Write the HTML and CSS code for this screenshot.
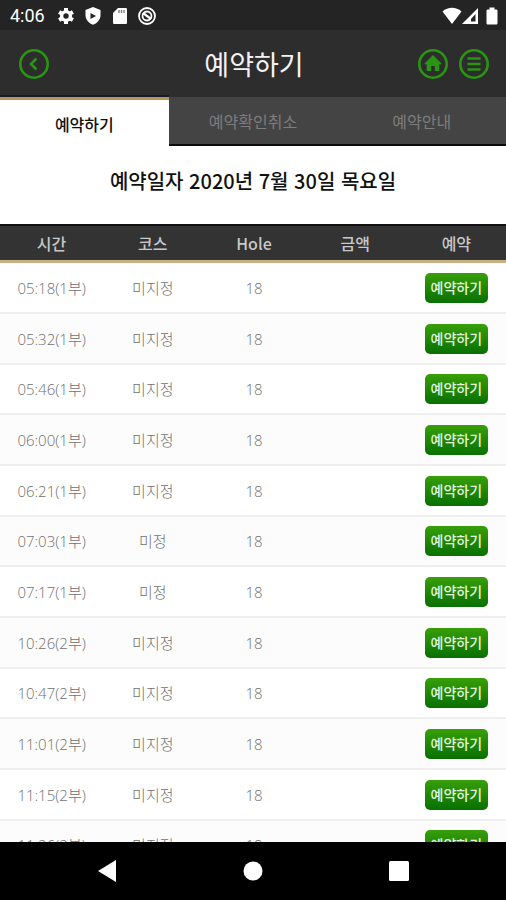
FILE: index.html
```html
<!DOCTYPE html>
<html lang="ko">
<head>
<meta charset="utf-8">
<meta name="viewport" content="width=device-width, initial-scale=1">
<title>예약하기</title>
<link rel="stylesheet" href="styles.css">
</head>
<body>
<div class="status">
  <span class="clock">4:06</span>
  <div class="notices">
    <svg viewBox="0 0 18 18"><g stroke="#fff" stroke-width="4"><path d="M9 1v16M2.1 5l13.8 8M2.1 13l13.8-8"/></g><circle cx="9" cy="9" r="6" fill="#fff"/><circle cx="9" cy="9" r="2.7" fill="#242424"/></svg>
    <svg viewBox="0 0 18 18"><path d="M9 0l7.500 3v5c0 4.500-3 8-7.500 9.800C4.500 16 1.500 12.500 1.500 8V3z" fill="#fff"/><path d="M6.500 6l5.500 3-5.500 3z" fill="#242424"/></svg>
    <svg viewBox="0 0 18 18"><path d="M7 1h7.500c1 0 1.500.5 1.500 1.500v13c0 1-.5 1.500-1.500 1.500h-11c-1 0-1.500-.5-1.500-1.500V6z" fill="#fff"/><path d="M8 3v3M10.500 3v3M13 3v3" stroke="#777" stroke-width="1.300"/></svg>
    <svg viewBox="0 0 18 18"><g fill="none" stroke="#fff"><circle cx="9" cy="9" r="8" stroke-width="1.800"/><circle cx="9" cy="9" r="4.500" stroke-width="1.800"/><path d="M5 6l8 6" stroke-width="2.200"/></g></svg>
  </div>
  <div class="signals">
    <svg class="wifi" viewBox="0 0 20 18"><path d="M.5 4.500C6-.5 14-.5 19.500 4.500L10 17z" fill="#fff"/></svg>
    <svg class="cell" viewBox="0 0 17 18"><path d="M0 17L16 1v16z" fill="#fff"/><path d="M9 14.500V12l4.500-5v7.500z" fill="#242424"/></svg>
    <svg class="battery" viewBox="0 0 12 18"><path d="M3.500 2.500V.5h5v2H10c1 0 1.500.5 1.500 1.500v12c0 1-.5 1.500-1.500 1.500H2C1 17.500.5 17 .5 16V4c0-1 .5-1.500 1.500-1.500z" fill="#fff"/></svg>
  </div>
</div>
<header class="bar">
  <div class="side">
    <button class="round" type="button" aria-label="뒤로"><svg viewBox="0 0 30 30"><circle cx="15" cy="15" r="13.700"/><path d="M17.500 9.500L12 15l5.500 5.500"/></svg></button>
  </div>
  <h1>예약하기</h1>
  <div class="side end">
    <button class="round" type="button" aria-label="홈"><svg viewBox="0 0 30 30"><circle cx="15" cy="15" r="13.700"/><path class="solid" d="M15 6l8.500 8.500-1.200 1.300-1-.8v7h-4.500v-5h-3.600v5H8.700v-7l-1 .8-1.200-1.300z"/></svg></button>
    <button class="round" type="button" aria-label="메뉴"><svg viewBox="0 0 30 30"><circle cx="15" cy="15" r="13.700"/><path d="M8.500 9.500h13M8.500 15h13M8.500 20.500h13"/></svg></button>
  </div>
</header>
<nav class="tabs">
  <a class="tab active" href="#" aria-current="page">예약하기</a>
  <a class="tab" href="#">예약확인취소</a>
  <a class="tab" href="#">예약안내</a>
</nav>
<main class="content">
  <h2>예약일자 2020년 7월 30일 목요일</h2>
  <table>
    <thead><tr><th>시간</th><th>코스</th><th>Hole</th><th>금액</th><th>예약</th></tr></thead>
    <tbody>
      <tr><td>05:18(1부)</td><td>미지정</td><td>18</td><td></td><td><button class="book" type="button">예약하기</button></td></tr>
      <tr><td>05:32(1부)</td><td>미지정</td><td>18</td><td></td><td><button class="book" type="button">예약하기</button></td></tr>
      <tr><td>05:46(1부)</td><td>미지정</td><td>18</td><td></td><td><button class="book" type="button">예약하기</button></td></tr>
      <tr><td>06:00(1부)</td><td>미지정</td><td>18</td><td></td><td><button class="book" type="button">예약하기</button></td></tr>
      <tr><td>06:21(1부)</td><td>미지정</td><td>18</td><td></td><td><button class="book" type="button">예약하기</button></td></tr>
      <tr><td>07:03(1부)</td><td>미정</td><td>18</td><td></td><td><button class="book" type="button">예약하기</button></td></tr>
      <tr><td>07:17(1부)</td><td>미정</td><td>18</td><td></td><td><button class="book" type="button">예약하기</button></td></tr>
      <tr><td>10:26(2부)</td><td>미지정</td><td>18</td><td></td><td><button class="book" type="button">예약하기</button></td></tr>
      <tr><td>10:47(2부)</td><td>미지정</td><td>18</td><td></td><td><button class="book" type="button">예약하기</button></td></tr>
      <tr><td>11:01(2부)</td><td>미지정</td><td>18</td><td></td><td><button class="book" type="button">예약하기</button></td></tr>
      <tr><td>11:15(2부)</td><td>미지정</td><td>18</td><td></td><td><button class="book" type="button">예약하기</button></td></tr>
      <tr><td>11:26(2부)</td><td>미지정</td><td>18</td><td></td><td><button class="book" type="button">예약하기</button></td></tr>
    </tbody>
  </table>
</main>
<div class="system">
  <button type="button" aria-label="이전"><svg viewBox="0 0 22 22"><path d="M20 0v22L2 11z"/></svg></button>
  <button type="button" aria-label="홈 화면"><svg viewBox="0 0 22 22"><circle cx="11" cy="11" r="9.500"/></svg></button>
  <button type="button" aria-label="최근 앱"><svg viewBox="0 0 22 22"><rect x="1" y="1" width="20" height="20" rx="1.500"/></svg></button>
</div>
</body>
</html>
```
FILE: styles.css
```css
* { box-sizing: border-box; }

body {
  margin: 0;
  height: 100vh;
  display: flex;
  flex-direction: column;
  overflow: hidden;
  background: #fff;
  font-family: "Noto Sans CJK KR", sans-serif;
}

button {
  padding: 0;
  border: 0;
  background: none;
  font-family: inherit;
}

svg { display: block; }

/* Status bar */
.status {
  flex: none;
  display: flex;
  align-items: center;
  height: 30px;
  padding: 2px 8px 0 10px;
  background: #242424;
}

.clock {
  color: #fff;
  font: 18px/28px Roboto, sans-serif;
}

.notices {
  display: flex;
  gap: 9px;
  margin-left: 12px;
}

.notices svg { width: 18px; height: 18px; }

.signals {
  display: flex;
  margin-left: auto;
}

.signals svg { height: 18px; }
.wifi { width: 20px; }
.cell { width: 17px; }
.battery { width: 12px; margin-left: 7px; }

/* Title bar */
.bar {
  flex: none;
  display: flex;
  align-items: center;
  height: 67px;
  padding: 0 17px 0 19px;
  background: #2d2d2d;
}

.side {
  flex: 1;
  display: flex;
  gap: 11px;
}

.end { justify-content: flex-end; }

h1 {
  margin: 0;
  color: #f2f2f2;
  font-size: 27px;
  font-weight: 400;
  line-height: 40px;
}

.round svg {
  width: 30px;
  height: 30px;
  fill: none;
  stroke: #2a9512;
  stroke-width: 2.6;
}

.round .solid {
  fill: #2a9512;
  stroke: none;
}

/* Tabs */
.tabs {
  flex: none;
  display: grid;
  grid-template-columns: repeat(3, 1fr);
  height: 49px;
}

.tab {
  height: 49px;
  border-bottom: 2px solid #0c0c0c;
  background: #444;
  color: #7d7d7d;
  font-size: 16px;
  line-height: 49px;
  text-align: center;
  text-decoration: none;
}

.active {
  border-top: 3px solid #b39a5a;
  border-bottom: 0;
  background: #fff;
  box-shadow: 0 -2px #16182c;
  color: #111;
  font-weight: 500;
}

/* Booking list */
.content {
  flex: 1;
  min-height: 0;
  overflow: hidden;
}

h2 {
  margin: 0;
  padding: 20px 0 28px;
  color: #111;
  font-size: 20px;
  font-weight: 500;
  line-height: 30px;
  text-align: center;
}

table {
  width: 100%;
  table-layout: fixed;
  border-collapse: separate;
  border-spacing: 0;
  text-align: center;
}

th {
  height: 39px;
  padding: 0 0 0 2px;
  border-top: 2px solid #111;
  border-bottom: 3px solid #c8b083;
  background: #333;
  color: #c8c8c8;
  font-size: 16px;
  font-weight: 500;
  line-height: 24px;
}

td {
  height: 51px;
  padding: 0 0 0 2px;
  border-bottom: 2px solid #eee;
  color: #707070;
  font-family: "Open Sans", "Noto Sans CJK KR", sans-serif;
  font-size: 15px;
  font-weight: 300;
  line-height: 24px;
}

tr:nth-child(even) td { background: #fcfcfc; }

tr:nth-child(3n) td { height: 50px; }

.book {
  display: block;
  width: 63px;
  height: 30px;
  margin: 0 auto;
  border-radius: 5px;
  background: linear-gradient(#389f0a, #087000);
  color: #e4f5df;
  font-size: 14px;
  font-weight: 500;
  line-height: 28px;
}

/* System navigation */
.system {
  flex: none;
  display: flex;
  justify-content: center;
  gap: 124px;
  height: 58px;
  background: #000;
}

.system svg {
  width: 22px;
  height: 22px;
  fill: #fff;
}
```
